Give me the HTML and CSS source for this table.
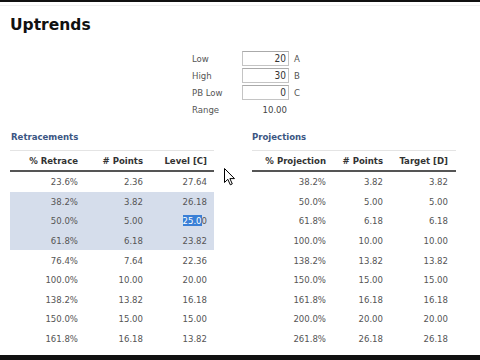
FILE: index.html
```html
<!DOCTYPE html>
<html>
<head>
<meta charset="utf-8">
<link rel="stylesheet" href="styles.css">
</head>
<body>
<div class="topbar"></div>
<div class="page">
  <h1 class="title">Uptrends</h1>
  <div class="form">
    <span class="lbl">Low</span><span class="inp">20</span><span class="tag">A</span>
    <span class="lbl">High</span><span class="inp">30</span><span class="tag">B</span>
    <span class="lbl">PB Low</span><span class="inp">0</span><span class="tag">C</span>
    <span class="lbl">Range</span><span class="val">10.00</span><span class="tag"></span>
  </div>
  <div class="sections">
    <div class="section left">
      <div class="sec-title">Retracements</div>
      <table class="grid">
        <colgroup><col class="c1"><col class="c2"><col class="c3"></colgroup>
        <thead><tr><th>% Retrace</th><th># Points</th><th>Level [C]</th></tr></thead>
        <tbody>
          <tr><td>23.6%</td><td>2.36</td><td>27.64</td></tr>
          <tr class="hl"><td>38.2%</td><td>3.82</td><td>26.18</td></tr>
          <tr class="hl"><td>50.0%</td><td>5.00</td><td><span class="sel">25.0</span>0</td></tr>
          <tr class="hl"><td>61.8%</td><td>6.18</td><td>23.82</td></tr>
          <tr><td>76.4%</td><td>7.64</td><td>22.36</td></tr>
          <tr><td>100.0%</td><td>10.00</td><td>20.00</td></tr>
          <tr><td>138.2%</td><td>13.82</td><td>16.18</td></tr>
          <tr><td>150.0%</td><td>15.00</td><td>15.00</td></tr>
          <tr><td>161.8%</td><td>16.18</td><td>13.82</td></tr>
        </tbody>
      </table>
    </div>
    <div class="section right">
      <div class="sec-title">Projections</div>
      <table class="grid">
        <colgroup><col class="p1"><col class="p2"><col class="p3"></colgroup>
        <thead><tr><th>% Projection</th><th># Points</th><th>Target [D]</th></tr></thead>
        <tbody>
          <tr><td>38.2%</td><td>3.82</td><td>3.82</td></tr>
          <tr><td>50.0%</td><td>5.00</td><td>5.00</td></tr>
          <tr><td>61.8%</td><td>6.18</td><td>6.18</td></tr>
          <tr><td>100.0%</td><td>10.00</td><td>10.00</td></tr>
          <tr><td>138.2%</td><td>13.82</td><td>13.82</td></tr>
          <tr><td>150.0%</td><td>15.00</td><td>15.00</td></tr>
          <tr><td>161.8%</td><td>16.18</td><td>16.18</td></tr>
          <tr><td>200.0%</td><td>20.00</td><td>20.00</td></tr>
          <tr><td>261.8%</td><td>26.18</td><td>26.18</td></tr>
        </tbody>
      </table>
    </div>
    <svg class="cursor" width="12" height="18" viewBox="0 0 12 18"><path d="M0.5 0.5 L0.5 14.5 L3.8 11.3 L6.3 16.8 L8.3 15.9 L5.9 10.6 L10.5 10.6 Z" fill="#fff" stroke="#000" stroke-width="1" stroke-linejoin="miter"/></svg>
  </div>
</div>
<div class="bottombar"></div>
</body>
</html>
```
FILE: styles.css
```css
html, body { margin: 0; padding: 0; }
body {
  width: 480px;
  height: 360px;
  overflow: hidden;
  background: #fff;
  display: flex;
  flex-direction: column;
  font-family: "DejaVu Sans Condensed", "DejaVu Sans", sans-serif;
  font-size: 9.5px;
  color: #555;
}
.topbar { height: 2px; background: #111; flex: none; }
.bottombar { height: 5px; background: #111; flex: none; }
.page {
  flex: 1;
  position: relative;
  padding: 0 0 0 10px;
  border-top: 1px solid #f0f0f0;
  margin-top: 3px;
}
.title {
  margin: 9px 0 0 0;
  height: 20px;
  line-height: 20px;
  font-family: "DejaVu Sans", sans-serif;
  font-weight: bold;
  font-size: 15.5px;
  color: #111;
}
.form {
  margin: 15px 0 0 182px;
  display: grid;
  grid-template-columns: 50px 47px 20px;
  grid-auto-rows: 17px;
  column-gap: 0;
  align-items: center;
}
.lbl { color: #555; }
.inp {
  box-sizing: border-box;
  height: 15px;
  border: 1px solid #c4c4c4;
  border-top-color: #aaa;
  text-align: right;
  padding-right: 2px;
  line-height: 13px;
  color: #333;
  font-size: 10px;
}
.val { text-align: right; padding-right: 2px; color: #444; }
.tag { padding-left: 5px; color: #555; }
.sections {
  margin-top: 12px;
  display: flex;
  gap: 38px;
  position: relative;
}
.section { width: 204px; }
.sec-title {
  height: 14px;
  line-height: 14px;
  font-weight: bold;
  color: #3b5683;
  margin-bottom: 6px;
  padding-left: 1px;
}
.right .sec-title { padding-left: 0; }
.grid {
  width: 204px;
  table-layout: fixed;
  border-collapse: collapse;
  border-top: 1px solid #e4e4e4;
}
.c1 { width: 74px; } .c2 { width: 65px; } .c3 { width: 65px; }
.p1 { width: 80px; } .p2 { width: 57px; } .p3 { width: 67px; }
.grid th {
  height: 19px;
  padding: 0 6px 0 0;
  text-align: right;
  font-weight: bold;
  color: #333;
  border-bottom: 2px solid #555;
}
.grid th:last-child { padding-right: 7px; }
.right .grid th:last-child { padding-right: 8px; }
.grid td {
  height: 19.6px;
  padding: 0 6px 0 0;
  text-align: right;
  color: #555;
}
.grid td:last-child { padding-right: 7px; }
.right .grid td:last-child { padding-right: 8px; }
.grid tr.hl td { background: #d5ddeb; }
.sel { background: #3a7fd6; color: #fff; }
.cursor { position: absolute; left: 214px; top: 38px; }
```
